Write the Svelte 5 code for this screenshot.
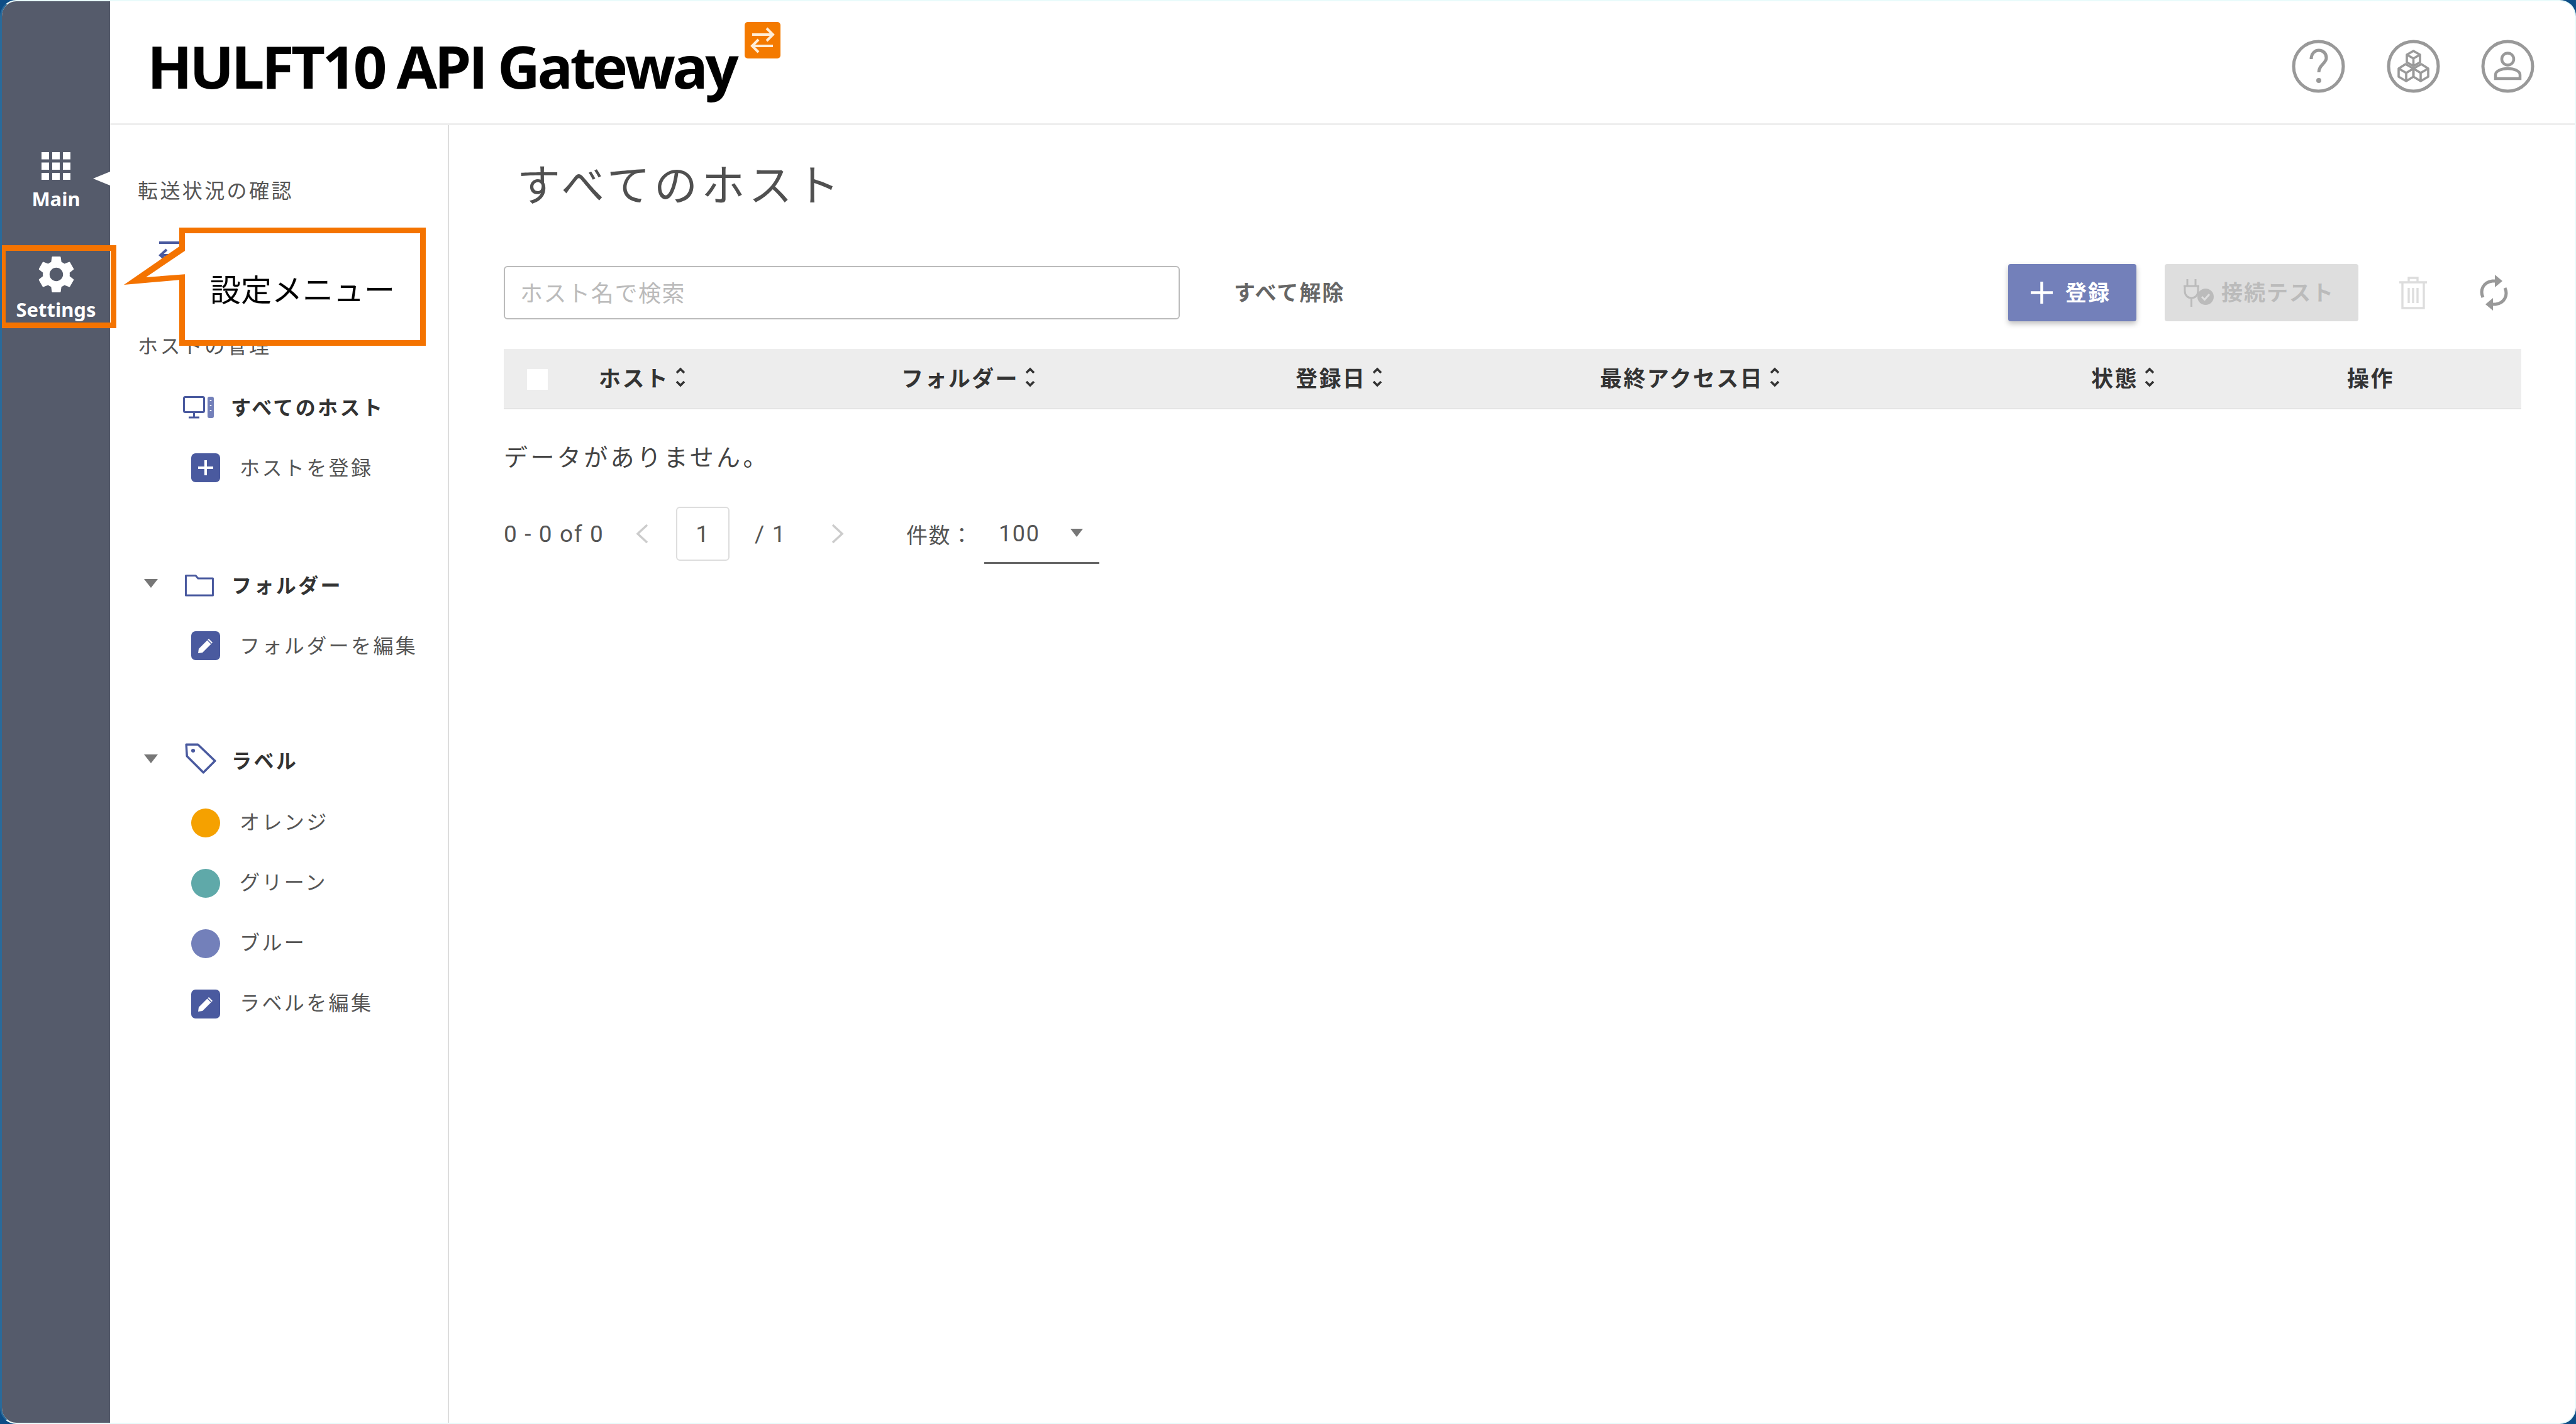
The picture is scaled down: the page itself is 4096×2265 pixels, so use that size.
<script>
  const columns = [
    { label: "ホスト", sort: true },
    { label: "フォルダー", sort: true },
    { label: "登録日", sort: true },
    { label: "最終アクセス日", sort: true },
    { label: "状態", sort: true },
    { label: "操作", sort: false }
  ];

  const labels = [
    { name: "オレンジ", color: "#f5a100" },
    { name: "グリーン", color: "#5fa9a9" },
    { name: "ブルー", color: "#7380ba" }
  ];
</script>

{#snippet sortIcon()}
  <svg class="sort" viewBox="0 0 20 32" fill="none" stroke="#333" stroke-width="3.6">
    <path d="M4 9 L10 3 L16 9" />
    <path d="M4 23 L10 29 L16 23" />
  </svg>
{/snippet}

{#snippet plusTile()}
  <svg class="tile" viewBox="0 0 46 46">
    <rect width="46" height="46" rx="7" fill="#4a5a9f" />
    <path d="M23 11 V35 M11 23 H35" stroke="#fff" stroke-width="4" />
  </svg>
{/snippet}

{#snippet editTile()}
  <svg class="tile" viewBox="0 0 46 46">
    <rect width="46" height="46" rx="7" fill="#4a5a9f" />
    <path d="M11 35 L12 28 L28 12 L34 18 L18 34 Z" fill="#fff" />
    <path d="M26 14 L32 20" stroke="#4a5a9f" stroke-width="1.5" />
  </svg>
{/snippet}

{#snippet caret()}
  <svg class="caret" viewBox="0 0 24 16"><path d="M1 1 H23 L12 15 Z" fill="#777" /></svg>
{/snippet}

<div class="screen">
  <div class="window">
    <aside class="rail">
      <div class="rail-item main-item">
        <svg class="grid-icon" viewBox="0 0 46 44" fill="#fff">
          {#each [0, 1, 2] as r}
            {#each [0, 1, 2] as c}
              <rect x={c * 17} y={r * 16.5} width="12" height="11.5" />
            {/each}
          {/each}
        </svg>
        <span>Main</span>
        <i class="pointer"></i>
      </div>
      <div class="rail-item settings-item">
        <svg class="gear" viewBox="2.4 2.4 19.2 19.2" fill="#fff">
          <path d="M19.14,12.94c0.04-0.3,0.06-0.61,0.06-0.94c0-0.32-0.02-0.64-0.07-0.94l2.03-1.58c0.18-0.14,0.23-0.41,0.12-0.61 l-1.92-3.32c-0.12-0.22-0.37-0.29-0.59-0.22l-2.39,0.96c-0.5-0.38-1.03-0.7-1.62-0.94L14.4,2.81c-0.04-0.24-0.24-0.41-0.48-0.41 h-3.84c-0.24,0-0.43,0.17-0.47,0.41L9.25,5.35C8.66,5.59,8.12,5.92,7.63,6.29L5.24,5.33c-0.22-0.08-0.47,0-0.59,0.22L2.74,8.87 C2.62,9.08,2.66,9.34,2.86,9.48l2.03,1.58C4.84,11.36,4.8,11.69,4.8,12s0.02,0.64,0.07,0.94l-2.03,1.58 c-0.18,0.14-0.23,0.41-0.12,0.61l1.92,3.32c0.12,0.22,0.37,0.29,0.59,0.22l2.39-0.96c0.5,0.38,1.03,0.7,1.62,0.94l0.36,2.54 c0.05,0.24,0.24,0.41,0.48,0.41h3.84c0.24,0,0.44-0.17,0.47-0.41l0.36-2.54c0.59-0.24,1.13-0.56,1.62-0.94l2.39,0.96 c0.22,0.08,0.47,0,0.59-0.22l1.92-3.32c0.12-0.22,0.07-0.47-0.12-0.61L19.14,12.94z M12,15.6c-1.98,0-3.6-1.62-3.6-3.6 s1.62-3.6,3.6-3.6s3.6,1.62,3.6,3.6S13.98,15.6,12,15.6z" />
        </svg>
        <span>Settings</span>
      </div>
    </aside>

    <div class="right">
      <header class="topbar">
        <div class="logo">
          <span class="logo-text">HULFT10 API Gateway</span>
          <svg class="badge" viewBox="0 0 57 58">
            <rect width="57" height="58" rx="5" fill="#f47a00" />
            <path d="M12 20 H44 M35 10 L45 20 L35 30 M45 38 H13 M22 28 L12 38 L22 48" fill="none" stroke="#ffeed8" stroke-width="4" />
          </svg>
        </div>
        <div class="top-icons">
          <svg class="round" viewBox="0 0 85 85" fill="none" stroke="#999" stroke-width="5">
            <circle cx="42.5" cy="42.5" r="39.5" />
            <path d="M31 31 C31 22 37 17 43 17 C50 17 55 22 55 29 C55 38 43 40 43 52" />
            <circle cx="43" cy="65" r="4" fill="#999" stroke="none" />
          </svg>
          <svg class="round" viewBox="0 0 85 85" fill="none" stroke="#999" stroke-width="5">
            <circle cx="42.5" cy="42.5" r="39.5" />
            <g stroke-width="3.6" stroke-linejoin="round">
              <path d="M42.5 18 L53 24 V36 L42.5 42 L32 36 V24 Z M32 24 L42.5 30 L53 24 M42.5 30 V42" />
              <path d="M30 39 L42.5 46 V59 L31 66 L19 59 V46 Z M19 46 L31 53 L42.5 46 M31 53 V66" />
              <path d="M55 39 L66 46 V59 L54 66 L42.5 59 V46 Z M42.5 46 L54 53 L66 46 M54 53 V66" />
            </g>
          </svg>
          <svg class="round" viewBox="0 0 85 85" fill="none" stroke="#999" stroke-width="5">
            <circle cx="42.5" cy="42.5" r="39.5" />
            <circle cx="42.5" cy="31" r="9.5" stroke-width="4.5" />
            <path d="M23 62 V56 C23 50 32 46 42.5 46 C53 46 62 50 62 56 V62 Z" stroke-width="4.5" />
          </svg>
        </div>
      </header>

      <div class="body">
        <nav class="sidenav">
          <div class="row heading first"><span>転送状況の確認</span></div>
          <div class="row transfer">
            <svg class="transfer-icon" viewBox="0 0 50 42" fill="none" stroke="#4a5a9f" stroke-width="4">
              <path d="M2 11 H46 M36 2 L46 11 L36 20 M48 31 H4 M14 22 L4 31 L14 40" />
            </svg>
          </div>
          <div class="row heading second"><span>ホストの管理</span></div>
          <div class="row top-row all-hosts">
            <svg class="host-icon" viewBox="0 0 50 36" fill="none" stroke="#4a5a9f" stroke-width="3">
              <rect x="1.5" y="1.5" width="32" height="24" rx="2" />
              <path d="M17.5 26 V33 M9 34 H26" />
              <rect x="39" y="1" width="10" height="34" rx="3" fill="#7380ba" stroke="none" />
              <path d="M44 6 V8 M44 14 V16 M44 22 V24" stroke="#fff" stroke-width="2.5" />
            </svg>
            <span class="strong">すべてのホスト</span>
          </div>
          <div class="row sub-row">
            {@render plusTile()}
            <span>ホストを登録</span>
          </div>

          <div class="row top-row group">
            {@render caret()}
            <svg class="folder-icon" viewBox="0 0 46 36" fill="none" stroke="#4a5a9f" stroke-width="3">
              <path d="M1.5 33 V2.5 H17 L21 7 H44.5 V34 H1.5 Z" stroke-linejoin="round" />
            </svg>
            <span class="strong">フォルダー</span>
          </div>
          <div class="row sub-row">
            {@render editTile()}
            <span>フォルダーを編集</span>
          </div>

          <div class="row top-row group label-group">
            {@render caret()}
            <svg class="folder-icon tag-icon" viewBox="0 0 46 46" fill="none" stroke="#4a5a9f" stroke-width="3.2">
              <path d="M2 3 H19 L44 27 L27 44 L3 20 Z" stroke-linejoin="round" />
              <circle cx="12" cy="12" r="2.8" fill="#4a5a9f" stroke="none" />
            </svg>
            <span class="strong">ラベル</span>
          </div>
          {#each labels as label}
            <div class="row sub-row tagged">
              <i class="dot" style="background: {label.color}"></i>
              <span>{label.name}</span>
            </div>
          {/each}
          <div class="row sub-row tagged">
            {@render editTile()}
            <span>ラベルを編集</span>
          </div>
        </nav>

        <main class="content">
          <h1>すべてのホスト</h1>

          <div class="toolbar">
            <div class="search"><span>ホスト名で検索</span></div>
            <span class="clear">すべて解除</span>
            <div class="spacer"></div>
            <button class="btn primary">
              <svg viewBox="0 0 35 35"><path d="M17.5 0 V35 M0 17.5 H35" stroke="#fff" stroke-width="4.5" /></svg>
              <span>登録</span>
            </button>
            <button class="btn disabled">
              <svg viewBox="0 0 51 46" fill="none" stroke="#bbb" stroke-width="3">
                <path d="M9 1 V12 M22 1 V12 M3 12 H28 M5 12 V20 C5 27 10 31 15.5 31 C21 31 26 27 26 20 V12 M15.5 31 V45" />
                <circle cx="38" cy="29" r="13" fill="#bbb" stroke="none" />
                <path d="M32 29 L36.5 33.5 L44 25" stroke="#dedede" />
              </svg>
              <span>接続テスト</span>
            </button>
            <svg class="trash" viewBox="0 0 48 54" fill="none" stroke="#ddd" stroke-width="3.4">
              <path d="M2 10 H46 M17 10 V3 H31 V10 M7 10 V51 H41 V10 M17 19 V43 M24 19 V43 M31 19 V43" />
            </svg>
            <svg class="refresh" viewBox="0 0 45 59" fill="none" stroke="#999" stroke-width="5">
              <path d="M5 37 C0 26 5 13 20 11 H27" />
              <path d="M24 1 L36 11 L24 21" fill="#999" stroke="none" />
              <path d="M40 22 C45 33 40 46 25 48 H18" />
              <path d="M21 38 L9 48 L21 58" fill="#999" stroke="none" />
            </svg>
          </div>

          <div class="thead">
            <i class="check"></i>
            {#each columns as col}
              <div class="th">
                <span>{col.label}</span>
                {#if col.sort}{@render sortIcon()}{/if}
              </div>
            {/each}
          </div>

          <p class="empty"><span>データがありません。</span></p>

          <div class="pager">
            <span class="range">0 - 0 of 0</span>
            <svg class="chev prev" viewBox="0 0 24 32" fill="none" stroke="#ccc" stroke-width="3.5"><path d="M20 2 L5 16 L20 30" /></svg>
            <div class="page-box">1</div>
            <span class="total">/ 1</span>
            <svg class="chev next" viewBox="0 0 24 32" fill="none" stroke="#ccc" stroke-width="3.5"><path d="M4 2 L19 16 L4 30" /></svg>
            <span class="count">件数：</span>
            <div class="select">
              <span class="value">100</span>
              <svg class="select-caret" viewBox="0 0 20 13"><path d="M0 0 H20 L10 13 Z" fill="#777" /></svg>
            </div>
          </div>
        </main>
      </div>
    </div>

    <div class="highlight"></div>
    <div class="callout">設定メニュー</div>
    <svg class="tail" viewBox="0 0 100 70">
      <path d="M91 0 L0 63 L91 55 Z" fill="#f47300" />
      <path d="M100 7 L35 51 L100 46 Z" fill="#fff" />
    </svg>
  </div>
</div>

<style>
  :global(body) {
    margin: 0;
  }

  .screen {
    width: 4096px;
    height: 2265px;
    background: #0d4d86;
    overflow: hidden;
    font-family: Roboto, "Noto Sans CJK JP", sans-serif;
    color: #444;
  }

  .window {
    position: relative;
    box-sizing: border-box;
    height: 100%;
    display: flex;
    background: #fff;
    border-style: solid;
    border-color: #e9fbfb;
    border-width: 2px 2px 2px 3px;
    border-left-color: #2a6a9a;
    border-radius: 26px;
    overflow: hidden;
  }

  .rail {
    width: 172px;
    flex: none;
    background: #555b6b;
    color: #fff;
    padding-top: 240px;
    box-sizing: border-box;
  }

  .rail-item {
    position: relative;
    display: flex;
    flex-direction: column;
    align-items: center;
    font-family: "Noto Sans", sans-serif;
    font-weight: 700;
    font-size: 31px;
    line-height: 40px;
  }

  .main-item {
    height: 166px;
    gap: 10px;
  }

  .settings-item {
    gap: 7px;
  }

  .grid-icon {
    width: 46px;
    height: 44px;
  }

  .gear {
    width: 57px;
    height: 57px;
  }

  .pointer {
    position: absolute;
    right: 0;
    top: 31px;
    border-style: solid;
    border-width: 11px 27px 11px 0;
    border-color: transparent #fff transparent transparent;
  }

  .right {
    flex: 1;
    min-width: 0;
    display: flex;
    flex-direction: column;
  }

  .topbar {
    height: 197px;
    flex: none;
    box-sizing: border-box;
    border-bottom: 3px solid #eee;
    display: flex;
    justify-content: space-between;
    padding: 33px 64px 0 59px;
  }

  .logo {
    display: flex;
    align-items: flex-start;
  }

  .logo-text {
    font-family: "Open Sans", sans-serif;
    font-weight: 700;
    font-size: 94px;
    line-height: 128px;
    letter-spacing: -4.7px;
    color: #000;
    margin-top: 6px;
    white-space: nowrap;
  }

  .badge {
    width: 57px;
    height: 58px;
    margin-left: 14px;
  }

  .top-icons {
    display: flex;
    gap: 65.5px;
    padding-top: 28px;
  }

  .round {
    width: 85px;
    height: 85px;
  }

  .body {
    flex: 1;
    display: flex;
    min-height: 0;
  }

  .sidenav {
    width: 539px;
    flex: none;
    box-sizing: border-box;
    border-right: 2px solid #ddd;
    padding-top: 56px;
    font-size: 32px;
    letter-spacing: 3.4px;
    color: #555;
  }

  .row {
    height: 96px;
    display: flex;
    align-items: center;
    white-space: nowrap;
  }

  .row span {
    padding-bottom: 5px;
  }

  .heading {
    padding-left: 44px;
  }

  .transfer {
    margin-top: -3px;
    padding-left: 76px;
  }

  .transfer-icon {
    width: 50px;
    height: 42px;
  }

  .second {
    margin-top: 58px;
  }

  .top-row {
    padding-left: 53px;
  }

  .strong {
    font-weight: 700;
    color: #333;
  }

  .all-hosts {
    margin-top: 2px;
    padding-left: 116px;
    gap: 26px;
  }

  .host-icon {
    width: 50px;
    height: 36px;
  }

  .group {
    margin-top: 91px;
    gap: 42px;
  }

  .label-group {
    margin-top: 87px;
    margin-bottom: 3px;
  }

  .group .strong {
    margin-left: -14px;
  }

  .caret {
    width: 24px;
    height: 16px;
    margin-top: -6px;
  }

  .folder-icon {
    width: 46px;
    height: 36px;
  }

  .tag-icon {
    width: 50px;
    height: 50px;
    margin-top: -8px;
    margin-right: -4px;
  }

  .sub-row {
    padding-left: 129px;
    gap: 31px;
  }

  .tagged span {
    padding-bottom: 8px;
  }

  .tile {
    width: 46px;
    height: 46px;
    flex: none;
  }

  .dot {
    width: 46px;
    height: 46px;
    border-radius: 50%;
    flex: none;
  }

  .content {
    flex: 1;
    min-width: 0;
    box-sizing: border-box;
    padding: 44px 85px 0 87px;
  }

  h1 {
    margin: 0;
    height: 108px;
    line-height: 108px;
    padding-left: 21px;
    font-size: 69px;
    font-weight: 400;
    letter-spacing: 6.2px;
    color: #505050;
  }

  .toolbar {
    margin-top: 69px;
    height: 91px;
    display: flex;
    align-items: center;
  }

  .search {
    box-sizing: border-box;
    width: 1075px;
    height: 85px;
    border: 2px solid #bbb;
    border-radius: 6px;
    display: flex;
    align-items: center;
    padding-left: 24px;
    font-size: 36px;
    letter-spacing: 1.6px;
    color: #bbb;
  }

  .search span {
    padding-bottom: 4px;
  }

  .clear {
    margin-left: 86px;
    margin-bottom: 4px;
    font-size: 34px;
    font-weight: 700;
    letter-spacing: 2px;
    color: #666;
  }

  .spacer {
    flex: 1;
  }

  .btn {
    box-sizing: border-box;
    height: 91px;
    border: none;
    border-radius: 4px;
    display: flex;
    align-items: center;
    font-family: inherit;
    font-size: 34px;
    font-weight: 700;
    letter-spacing: 2px;
    padding: 0;
  }

  .btn span {
    padding-bottom: 4px;
  }

  .primary {
    width: 204px;
    padding-left: 36px;
    gap: 20px;
    background: #7380ba;
    color: #fff;
    box-shadow: 0 4px 8px rgba(0, 0, 0, 0.25);
  }

  .primary svg {
    width: 35px;
    height: 35px;
  }

  .disabled {
    width: 308px;
    margin-left: 45px;
    padding-left: 27px;
    gap: 12px;
    background: #dedede;
    color: #bbb;
  }

  .disabled svg {
    width: 51px;
    height: 46px;
  }

  .trash {
    width: 48px;
    height: 54px;
    margin-left: 63px;
  }

  .refresh {
    width: 45px;
    height: 59px;
    margin-left: 82px;
    margin-right: 21px;
  }

  .thead {
    position: relative;
    margin-top: 44px;
    height: 96px;
    box-sizing: border-box;
    background: #ededed;
    border-bottom: 2px solid #e4e4e4;
    display: grid;
    grid-template-columns: 481px 627px 484px 781px 407px 1fr;
    padding-left: 151px;
    align-items: center;
  }

  .check {
    position: absolute;
    left: 37px;
    top: 32px;
    width: 33px;
    height: 33px;
    background: #fff;
  }

  .th {
    display: flex;
    align-items: center;
    gap: 8px;
    font-size: 35px;
    font-weight: 700;
    letter-spacing: 2.4px;
    color: #333;
    white-space: nowrap;
  }

  .th span {
    padding-bottom: 6px;
  }

  .sort {
    width: 20px;
    height: 32px;
    margin-bottom: 4px;
  }

  .empty {
    margin: 0;
    height: 150px;
    display: flex;
    align-items: center;
    font-size: 38px;
    letter-spacing: 4.4px;
    color: #444;
  }

  .empty span {
    padding-bottom: 4px;
  }

  .pager {
    height: 96px;
    display: flex;
    align-items: center;
    font-size: 37px;
    letter-spacing: 1.6px;
    color: #555;
    position: relative;
  }

  .range {
    width: 208px;
    flex: none;
    white-space: nowrap;
  }

  .chev {
    width: 24px;
    height: 32px;
    flex: none;
  }

  .page-box {
    box-sizing: border-box;
    width: 85px;
    height: 86px;
    margin-left: 42px;
    border: 2px solid #ddd;
    border-radius: 6px;
    display: flex;
    align-items: center;
    justify-content: center;
  }

  .total {
    margin-left: 40px;
    width: 120px;
  }

  .count {
    margin-left: 97px;
    width: 124px;
    font-size: 34px;
    letter-spacing: 1.6px;
  }

  .select {
    box-sizing: border-box;
    width: 183px;
    height: 96px;
    border-bottom: 3px solid #666;
    display: flex;
    align-items: center;
    padding-left: 23px;
    position: relative;
  }

  .value {
    padding-top: 3px;
    font-size: 36px;
    letter-spacing: 1.6px;
  }

  .select-caret {
    width: 20px;
    height: 13px;
    margin-left: 48px;
  }

  .highlight {
    position: absolute;
    left: -3px;
    top: 388px;
    width: 185px;
    height: 132px;
    box-sizing: border-box;
    border: 9px solid #f47300;
  }

  .callout {
    position: absolute;
    left: 282px;
    top: 360px;
    width: 392px;
    height: 188px;
    box-sizing: border-box;
    border: 9px solid #f47300;
    background: #fff;
    display: flex;
    align-items: center;
    justify-content: center;
    font-family: "Noto Sans CJK JP", sans-serif;
    font-size: 49px;
    color: #000;
    white-space: nowrap;
    padding-top: 2px;
  }

  .tail {
    position: absolute;
    left: 194px;
    top: 388px;
    width: 100px;
    height: 70px;
  }
</style>
